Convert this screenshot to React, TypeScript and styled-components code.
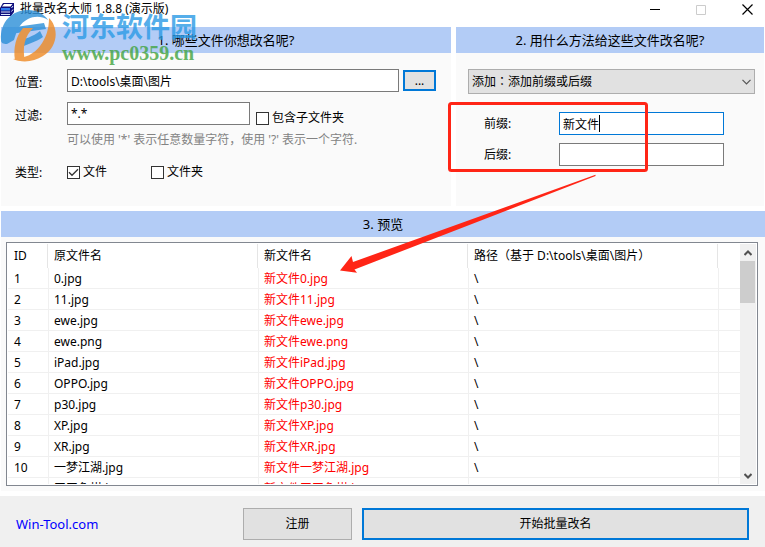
import React, { useState } from "react";
import styled, { createGlobalStyle } from "styled-components";

const Global = createGlobalStyle`
  *, *::before, *::after { box-sizing: border-box; }
  body { margin: 0; background: #fff; }
  body, input, button, select, table {
    font-family: "Noto Sans", "Noto Sans CJK SC", sans-serif;
    font-size: 12px;
    line-height: 20px;
    color: #000;
  }
`;

const Window = styled.div`
  position: relative;
  display: flex;
  flex-direction: column;
  height: 100vh;
  min-height: 420px;
  overflow: hidden;
  background: #fff;
`;

const TitleBar = styled.header`
  display: flex;
  align-items: flex-start;
  flex: none;
  height: 27px;
`;

const AppIcon = styled.svg`
  width: 15px;
  height: 18px;
  margin-right: 5px;
`;

const Title = styled.h1`
  flex: 1;
  margin: 0;
  font-size: 12px;
  font-weight: 400;
  line-height: 18px;
`;

const Controls = styled.div`
  display: flex;
`;

const ControlButton = styled.button`
  display: grid;
  place-items: center;
  width: 46px;
  height: 19px;
  padding: 0;
  border: 0;
  background: none;
  &:last-child { width: 41px; padding-left: 5px; }
`;

const Panels = styled.div`
  display: grid;
  grid-template-columns: minmax(0, 450fr) minmax(0, 308fr);
  gap: 5px;
  flex: none;
  padding: 0 1px 5px;
`;

const Panel = styled.section`
  background: #fafafa;
`;

const PanelTitle = styled.h2`
  margin: 0;
  height: 26px;
  background: #b3ccf6;
  font-size: 13px;
  font-weight: 400;
  line-height: 26px;
  text-align: center;
`;

const SourceForm = styled.div`
  display: grid;
  grid-template-columns: 52px minmax(0, 1fr);
  row-gap: 10px;
  padding: 16px 15px 24px 14px;
`;

const FieldLabel = styled.label`
  height: 23px;
  line-height: 27px;
`;

const GroupLabel = styled.span`
  line-height: 22px;
  height: 20px;
`;

const FieldRow = styled.div<{ $gap: number }>`
  display: flex;
  align-items: flex-start;
  gap: ${(p) => p.$gap}px;
  height: 23px;
`;

const TextBox = styled.input<{ $active?: boolean; $width?: string }>`
  width: ${(p) => p.$width ?? "100%"};
  min-width: 0;
  height: 23px;
  padding: 0 3px;
  border: 1px solid ${(p) => (p.$active ? "#0078d7" : "#7a7a7a")};
  border-radius: 0;
  background: #fff;
  outline: none;
`;

const BrowseButton = styled.button`
  flex: none;
  align-self: center;
  width: 33px;
  height: 21px;
  padding: 0;
  border: 2px solid #0078d7;
  background: #e1e1e1;
  line-height: 16px;
`;

const Hint = styled.p`
  grid-column: 2;
  margin: -5px 0 2px;
  color: #838383;
`;

const CheckLabel = styled.label<{ $low?: boolean }>`
  display: flex;
  align-items: center;
  gap: 3px;
  padding-top: ${(p) => (p.$low ? 6 : 0)}px;
  white-space: nowrap;
`;

const CheckFrame = styled.span`
  display: grid;
  width: 13px;
  height: 13px;
  > * { grid-area: 1 / 1; }
  svg { pointer-events: none; }
`;

const CheckInput = styled.input`
  appearance: none;
  width: 13px;
  height: 13px;
  margin: 0;
  border: 1px solid #333;
  background: #fff;
`;

const TypeRow = styled.div`
  display: grid;
  grid-template-columns: 84px 1fr;
`;

const MethodForm = styled.div`
  padding: 16px 9px 24px 12px;
`;

const SelectFrame = styled.div`
  display: grid;
  align-items: center;
  > * { grid-area: 1 / 1; }
  svg { justify-self: end; margin-right: 4px; pointer-events: none; }
`;

const Select = styled.select`
  appearance: none;
  width: 100%;
  height: 25px;
  padding: 0 20px 0 3px;
  border: 1px solid #adadad;
  border-radius: 0;
  background: #e1e1e1;
  font-family: "Noto Sans", "Noto Sans CJK TC", sans-serif;
`;

const AffixGrid = styled.div`
  display: grid;
  grid-template-columns: 75px minmax(0, 1fr);
  row-gap: 8px;
  padding: 18px 31px 0 16px;
`;

const AffixLabel = styled.label`
  height: 23px;
  line-height: 24px;
`;

const CaretBox = styled.div`
  position: relative;
`;

const Caret = styled.span`
  position: absolute;
  left: 40px;
  top: 3px;
  width: 1px;
  height: 17px;
  background: #000;
`;

const Preview = styled.section`
  display: flex;
  flex-direction: column;
  flex: 1;
  min-height: 0;
  margin: 0 0 5px 1px;
  background: #fafafa;
`;

const ListFrame = styled.div`
  display: flex;
  flex: 1;
  min-height: 0;
  margin: 5px 7px 5px 5px;
  padding: 1px;
  border: 1px solid #828790;
  background: #fff;
`;

const ListView = styled.div`
  flex: 1;
  overflow: hidden;
`;

const FileTable = styled.table`
  width: 100%;
  table-layout: fixed;
  border-collapse: separate;
  border-spacing: 0;
  th, td {
    padding: 0 0 0 6px;
    text-align: left;
    font-weight: 400;
    white-space: nowrap;
    overflow: hidden;
  }
  th { height: 24px; border-right: 1px solid #e5e5e5; }
  th:last-child { border-right: 0; }
  td {
    height: 21px;
    padding-top: 2px;
    border-bottom: 1px solid #f0f0f0;
    line-height: 18px;
  }
  td + td { padding-left: 5px; border-left: 1px solid #f0f0f0; }
`;

const Col = styled.col<{ $width?: number }>`
  width: ${(p) => (p.$width ? `${p.$width}px` : "auto")};
`;

const NewName = styled.td`
  color: #f00;
`;

const ScrollBar = styled.div`
  display: flex;
  flex-direction: column;
  flex: none;
  width: 16px;
  background: #f0f0f0;
`;

const ScrollButton = styled.button`
  display: grid;
  place-items: center;
  width: 16px;
  height: 17px;
  padding: 0;
  border: 0;
  background: none;
`;

const ScrollTrack = styled.div`
  flex: 1;
`;

const ScrollThumb = styled.div`
  width: 15px;
  height: 42px;
  background: #cdcdcd;
`;

const Footer = styled.footer`
  display: flex;
  flex: none;
  gap: 10px;
  padding: 12px 16px 7px;
  background: #f0f0f0;
`;

const SiteLink = styled.a`
  width: 217px;
  color: #00f;
  font-size: 13px;
  line-height: 32px;
  text-decoration: none;
`;

const ActionButton = styled.button<{ $primary?: boolean }>`
  flex: ${(p) => (p.$primary ? "1" : "0 0 109px")};
  height: 32px;
  padding: 0;
  border: ${(p) => (p.$primary ? "2px solid #0078d7" : "1px solid #adadad")};
  background: #e1e1e1;
`;

const Watermark = styled.div`
  position: absolute;
  left: 0;
  top: 8px;
  display: flex;
  opacity: 0.8;
  pointer-events: none;
`;

const WatermarkText = styled.div`
  margin-left: 4px;
`;

const WatermarkName = styled.div`
  color: #2b9be6;
  font: 700 27px/35px "Noto Sans CJK SC", sans-serif;
`;

const WatermarkUrl = styled.div`
  color: #43a441;
  font: 700 20px/20px "Liberation Serif", serif;
`;

const Annotation = styled.svg`
  position: absolute;
  left: 0;
  top: 0;
  pointer-events: none;
`;

const files = [
  "0.jpg", "11.jpg", "ewe.jpg", "ewe.png", "iPad.jpg", "OPPO.jpg",
  "p30.jpg", "XP.jpg", "XR.jpg", "一梦江湖.jpg", "天天象棋.jpg",
];

function Check({ id, label, initial = false, low }: { id: string; label: string; initial?: boolean; low?: boolean }) {
  const [on, setOn] = useState(initial);
  return (
    <CheckLabel htmlFor={id} $low={low}>
      <CheckFrame>
        <CheckInput id={id} type="checkbox" checked={on} onChange={() => setOn(!on)} />
        {on && (
          <svg width="13" height="13" viewBox="0 0 13 13" fill="none" stroke="#333" strokeWidth="1.3">
            <path d="M2 6.3 5 9.3 11 3.2" />
          </svg>
        )}
      </CheckFrame>
      {label}
    </CheckLabel>
  );
}

export default function App() {
  const [folder, setFolder] = useState("D:\\tools\\桌面\\图片");
  const [filter, setFilter] = useState("*.*");
  const [prefix, setPrefix] = useState("新文件");
  const [suffix, setSuffix] = useState("");

  return (
    <Window>
      <Global />
      <TitleBar>
        <AppIcon viewBox="0 0 15 18">
          <path d="M3 3h11v9l-3 4H0V8z" fill="#10107c" />
          <path d="M4 4h8.500l-2 2.500H2z" fill="#fff" />
          <path d="M1 8h9v2.500H1z" fill="#2f7df0" />
          <path d="M1 11.500h9v1H1zM1 14h9v1H1z" fill="#d9e6ff" />
          <path d="M11.500 8 13 6M11.500 11.500 13 9.500" stroke="#d9e6ff" />
        </AppIcon>
        <Title>批量改名大师 1.8.8 (演示版)</Title>
        <Controls>
          <ControlButton aria-label="最小化">
            <svg width="10" height="11"><path d="M0 5.500h10" stroke="#000" /></svg>
          </ControlButton>
          <ControlButton aria-label="最大化">
            <svg width="10" height="10"><path d="M.5.500h9v9h-9z" fill="none" stroke="#ccc" /></svg>
          </ControlButton>
          <ControlButton aria-label="关闭">
            <svg width="11" height="11"><path d="M.5.500l10 10M10.500.500l-10 10" stroke="#000" strokeWidth="1.200" /></svg>
          </ControlButton>
        </Controls>
      </TitleBar>

      <Panels>
        <Panel>
          <PanelTitle>1. 哪些文件你想改名呢?</PanelTitle>
          <SourceForm>
            <FieldLabel htmlFor="folder">位置:</FieldLabel>
            <FieldRow $gap={4}>
              <TextBox id="folder" value={folder} onChange={(e) => setFolder(e.target.value)} />
              <BrowseButton aria-label="浏览">...</BrowseButton>
            </FieldRow>
            <FieldLabel htmlFor="filter">过滤:</FieldLabel>
            <FieldRow $gap={6}>
              <TextBox id="filter" $width="183px" value={filter} onChange={(e) => setFilter(e.target.value)} />
              <Check id="sub" label="包含子文件夹" low />
            </FieldRow>
            <Hint>可以使用 '*' 表示任意数量字符，使用 '?' 表示一个字符.</Hint>
            <GroupLabel>类型:</GroupLabel>
            <TypeRow>
              <Check id="type-file" label="文件" initial />
              <Check id="type-folder" label="文件夹" />
            </TypeRow>
          </SourceForm>
        </Panel>
        <Panel>
          <PanelTitle>2. 用什么方法给这些文件改名呢?</PanelTitle>
          <MethodForm>
            <SelectFrame>
              <Select aria-label="改名方法" defaultValue="affix">
                <option value="affix">添加：添加前缀或后缀</option>
              </Select>
              <svg width="9" height="6" fill="none" stroke="#555" strokeWidth="1.200">
                <path d="M.5.800 4.500 4.800 8.500.800" />
              </svg>
            </SelectFrame>
            <AffixGrid>
              <AffixLabel htmlFor="prefix">前缀:</AffixLabel>
              <CaretBox>
                <TextBox id="prefix" $active value={prefix} onChange={(e) => setPrefix(e.target.value)} />
                <Caret />
              </CaretBox>
              <AffixLabel htmlFor="suffix">后缀:</AffixLabel>
              <TextBox id="suffix" value={suffix} onChange={(e) => setSuffix(e.target.value)} />
            </AffixGrid>
          </MethodForm>
        </Panel>
      </Panels>

      <Preview>
        <PanelTitle>3. 预览</PanelTitle>
        <ListFrame>
          <ListView>
            <FileTable>
              <colgroup>
                <Col $width={40} />
                <Col $width={210} />
                <Col $width={210} />
                <Col $width={250} />
                <Col />
              </colgroup>
              <thead>
                <tr>
                  <th>ID</th>
                  <th>原文件名</th>
                  <th>新文件名</th>
                  <th>路径（基于 D:\tools\桌面\图片）</th>
                  <th />
                </tr>
              </thead>
              <tbody>
                {files.map((name, i) => (
                  <tr key={name}>
                    <td>{i + 1}</td>
                    <td>{name}</td>
                    <NewName>{prefix + name}</NewName>
                    <td>\</td>
                    <td />
                  </tr>
                ))}
              </tbody>
            </FileTable>
          </ListView>
          <ScrollBar>
            <ScrollButton aria-label="向上滚动">
              <svg width="8" height="6" fill="none" stroke="#505050" strokeWidth="2"><path d="M.5 5 4 1.500 7.500 5" /></svg>
            </ScrollButton>
            <ScrollTrack><ScrollThumb /></ScrollTrack>
            <ScrollButton aria-label="向下滚动">
              <svg width="8" height="6" fill="none" stroke="#505050" strokeWidth="2"><path d="M.5 1 4 4.500 7.500 1" /></svg>
            </ScrollButton>
          </ScrollBar>
        </ListFrame>
      </Preview>

      <Footer>
        <SiteLink href="#">Win-Tool.com</SiteLink>
        <ActionButton>注册</ActionButton>
        <ActionButton $primary>开始批量改名</ActionButton>
      </Footer>

      <Watermark>
        <svg width="58" height="56" viewBox="0 8 58 56">
          <path d="M1 40C0 22 12 10 28 10c9 0 16 4 20 10-6-4-14-4-20-1-8 4-11 11-14 21l-7 4c-4 0-6-1-6-4z" fill="#2b8fd8" />
          <path d="M8 28l36-5 2 6-36 5zM17 43c8-5 16-6 23-12l3 6c-8 6-15 6-25 12z" fill="#2b8fd8" />
          <path d="M49 18c11 11 8 30-6 38-9 6-21 7-30 3 13-1 21-5 27-13 6-8 9-17 9-28z" fill="#f08a24" />
          <path d="M15 60c-2-12 1-24 8-32h10c-8 8-11 19-8 33z" fill="#f08a24" />
        </svg>
        <WatermarkText>
          <WatermarkName>河东软件园</WatermarkName>
          <WatermarkUrl>www.pc0359.cn</WatermarkUrl>
        </WatermarkText>
      </Watermark>

      <Annotation width="765" height="300" viewBox="0 0 765 300">
        <rect x="449.500" y="103.500" width="197" height="67" rx="2" fill="none" stroke="#ff2516" strokeWidth="3" />
        <path d="M340 270.500 351.500 256 353 262 595.500 174.800V176L354.500 269.500 357 272.700z" fill="#ff2516" />
      </Annotation>
    </Window>
  );
}
